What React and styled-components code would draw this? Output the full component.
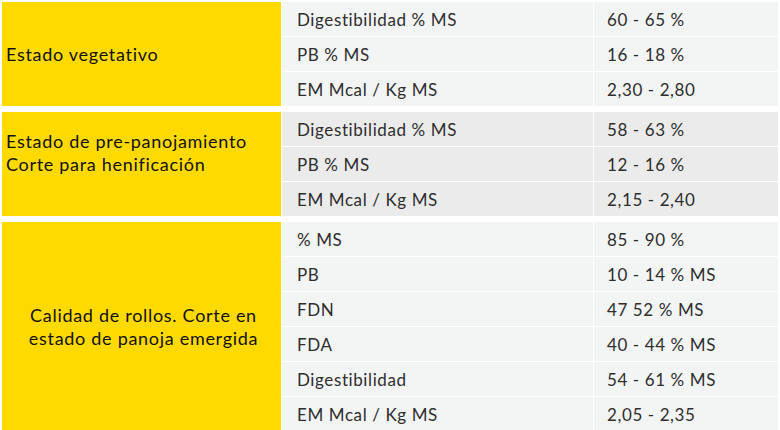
import styled, { createGlobalStyle } from "styled-components";

const GlobalStyle = createGlobalStyle`
  html, body {
    margin: 0;
    padding: 0;
    background: #ffffff;
  }
  body {
    font-family: Lato, "Open Sans", sans-serif;
  }
`;

const groups = [
  {
    label: ["Estado vegetativo"],
    align: "left",
    shade: "light",
    rows: [
      ["Digestibilidad % MS", "60 - 65 %"],
      ["PB % MS", "16 - 18 %"],
      ["EM Mcal / Kg MS", "2,30 - 2,80"],
    ],
  },
  {
    label: ["Estado de pre-panojamiento", "Corte para henificación"],
    align: "left",
    lift: true,
    shade: "dark",
    rows: [
      ["Digestibilidad % MS", "58 - 63 %"],
      ["PB % MS", "12 - 16 %"],
      ["EM Mcal / Kg MS", "2,15 - 2,40"],
    ],
  },
  {
    label: ["Calidad de rollos. Corte en", "estado de panoja emergida"],
    align: "center",
    shade: "light",
    rows: [
      ["% MS", "85 - 90 %"],
      ["PB", "10 - 14 % MS"],
      ["FDN", "47 52 % MS"],
      ["FDA", "40 - 44 % MS"],
      ["Digestibilidad", "54 - 61 % MS"],
      ["EM Mcal / Kg MS", "2,05 - 2,35"],
    ],
  },
];

export default function App() {
  return (
    <>
      <GlobalStyle />
      <Table>
        {groups.map((g, i) => (
          <Group key={i}>
            <Label $align={g.align} $lift={g.lift}>
              <div>
                {g.label.map((line) => (
                  <div key={line}>{line}</div>
                ))}
              </div>
            </Label>
            <Rows>
              {g.rows.map(([name, value]) => (
                <Row key={name}>
                  <Cell $shade={g.shade}>{name}</Cell>
                  <Cell $shade={g.shade} $value>
                    {value}
                  </Cell>
                </Row>
              ))}
            </Rows>
          </Group>
        ))}
      </Table>
    </>
  );
}

const Table = styled.div`
  display: flex;
  flex-direction: column;
  gap: 6px;
  padding: 2px 2px 0 2px;
  width: 780px;
  box-sizing: border-box;
`;

const Group = styled.div`
  display: flex;
  gap: 1px;
`;

const Label = styled.div`
  width: 279px;
  flex-shrink: 0;
  background: #ffda00;
  color: #111111;
  font-size: 18px;
  letter-spacing: 0.7px;
  line-height: 23px;
  display: flex;
  align-items: center;
  justify-content: ${(p) => (p.$align === "center" ? "center" : "flex-start")};
  text-align: ${(p) => p.$align};
  padding: ${(p) => (p.$lift ? "0 0 22px 4px" : "0 0 0 4px")};
  box-sizing: border-box;
`;

const Rows = styled.div`
  flex: 1;
  display: flex;
  flex-direction: column;
  gap: 1px;
`;

const Row = styled.div`
  display: grid;
  grid-template-columns: 311px 1fr;
  gap: 1px;
  height: 34px;
`;

const Cell = styled.div`
  background: ${(p) => (p.$shade === "dark" ? "#ebebeb" : "#f3f4f4")};
  color: #2e2e2e;
  font-size: 17px;
  letter-spacing: 0.6px;
  display: flex;
  align-items: center;
  padding-left: ${(p) => (p.$value ? "13px" : "15px")};
`;
